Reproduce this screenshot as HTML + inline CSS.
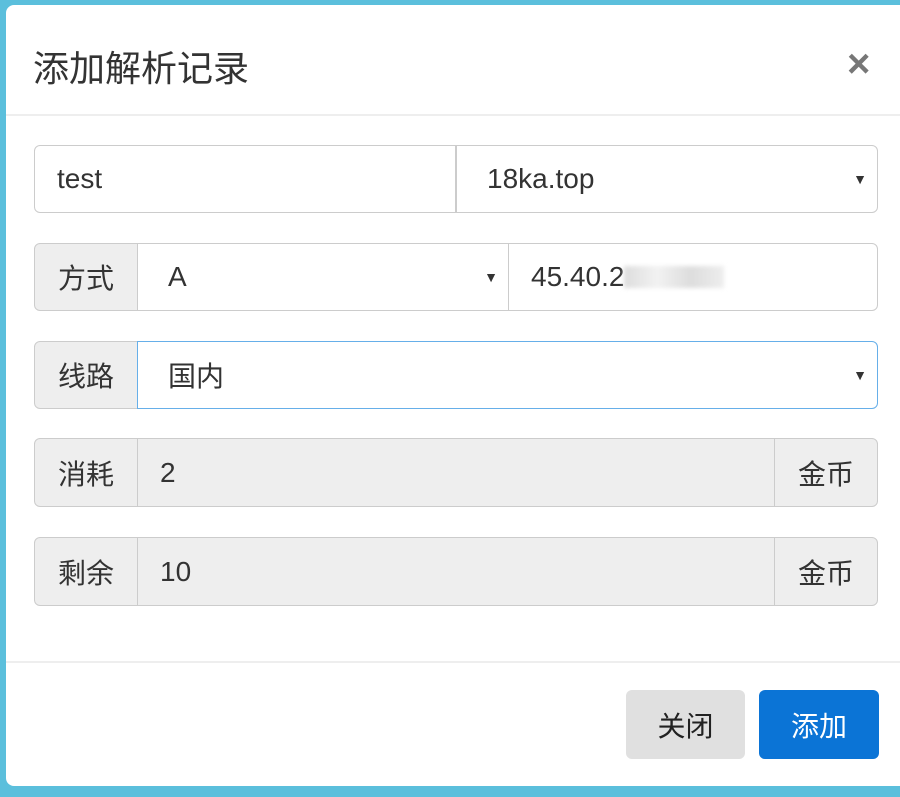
<!DOCTYPE html>
<html><head><meta charset="utf-8"><style>
body{margin:0;width:900px;height:797px;background:#5bbfdc;font-family:"Liberation Sans","Noto Sans CJK SC",sans-serif;overflow:hidden;position:relative;color:#333}
.modal{position:absolute;left:6px;top:5px;width:900px;height:781px;background:#fff;border-radius:8px 0 0 8px}
.abs{position:absolute;box-sizing:border-box}
.title{left:33px;top:40px;font-size:36px;color:#333}
.close{left:847px;top:42px;font-size:40px;color:#777;font-weight:bold;line-height:44px}
.hr{left:6px;width:894px;height:2px;background:#eee}
.box{border:1.5px solid #ccc;background:#fff;font-size:28px;display:flex;align-items:center;padding-left:22px}
.ad{background:#eee;justify-content:center;padding:0}
.dis{background:#eee}
.arr{position:absolute;right:10px;font-size:14px;color:#333}
.btn{border-radius:6px;font-size:28px;display:flex;align-items:center;justify-content:center}
</style></head><body>
<div class="modal"></div>
<div class="abs title">添加解析记录</div>
<div class="abs close">×</div>
<div class="abs hr" style="top:114px"></div>

<div class="abs box" style="left:34px;top:145px;width:422px;height:68px;border-radius:6px 0 0 6px">test</div>
<div class="abs box" style="left:456px;top:145px;width:422px;height:68px;border-radius:0 6px 6px 0;padding-left:30px">18ka.top<span class="arr">▼</span></div>

<div class="abs box ad" style="left:34px;top:243px;width:104px;height:68px;border-radius:6px 0 0 6px">方式</div>
<div class="abs box" style="left:137px;top:243px;width:372px;height:68px;padding-left:30px">A<span class="arr">▼</span></div>
<div class="abs box" style="left:508px;top:243px;width:370px;height:68px;border-radius:0 6px 6px 0">45.40.2<span style="display:inline-block;width:100px;height:22px;background:linear-gradient(90deg,#ddd,#f2f2f2,#ddd,#eee);filter:blur(2px)"></span></div>

<div class="abs box ad" style="left:34px;top:341px;width:104px;height:68px;border-radius:6px 0 0 6px">线路</div>
<div class="abs box" style="left:137px;top:341px;width:741px;height:68px;border-color:#66afe9;border-radius:0 6px 6px 0;padding-left:30px">国内<span class="arr">▼</span></div>

<div class="abs box ad" style="left:34px;top:438px;width:104px;height:69px;border-radius:6px 0 0 6px">消耗</div>
<div class="abs box dis" style="left:137px;top:438px;width:638px;height:69px">2</div>
<div class="abs box ad" style="left:774px;top:438px;width:104px;height:69px;border-radius:0 6px 6px 0">金币</div>

<div class="abs box ad" style="left:34px;top:537px;width:104px;height:69px;border-radius:6px 0 0 6px">剩余</div>
<div class="abs box dis" style="left:137px;top:537px;width:638px;height:69px">10</div>
<div class="abs box ad" style="left:774px;top:537px;width:104px;height:69px;border-radius:0 6px 6px 0">金币</div>

<div class="abs hr" style="top:661px"></div>
<div class="abs btn" style="left:626px;top:690px;width:119px;height:69px;background:#e0e0e0;color:#222">关闭</div>
<div class="abs btn" style="left:759px;top:690px;width:120px;height:69px;background:#0b74d6;color:#fff">添加</div>
</body></html>
